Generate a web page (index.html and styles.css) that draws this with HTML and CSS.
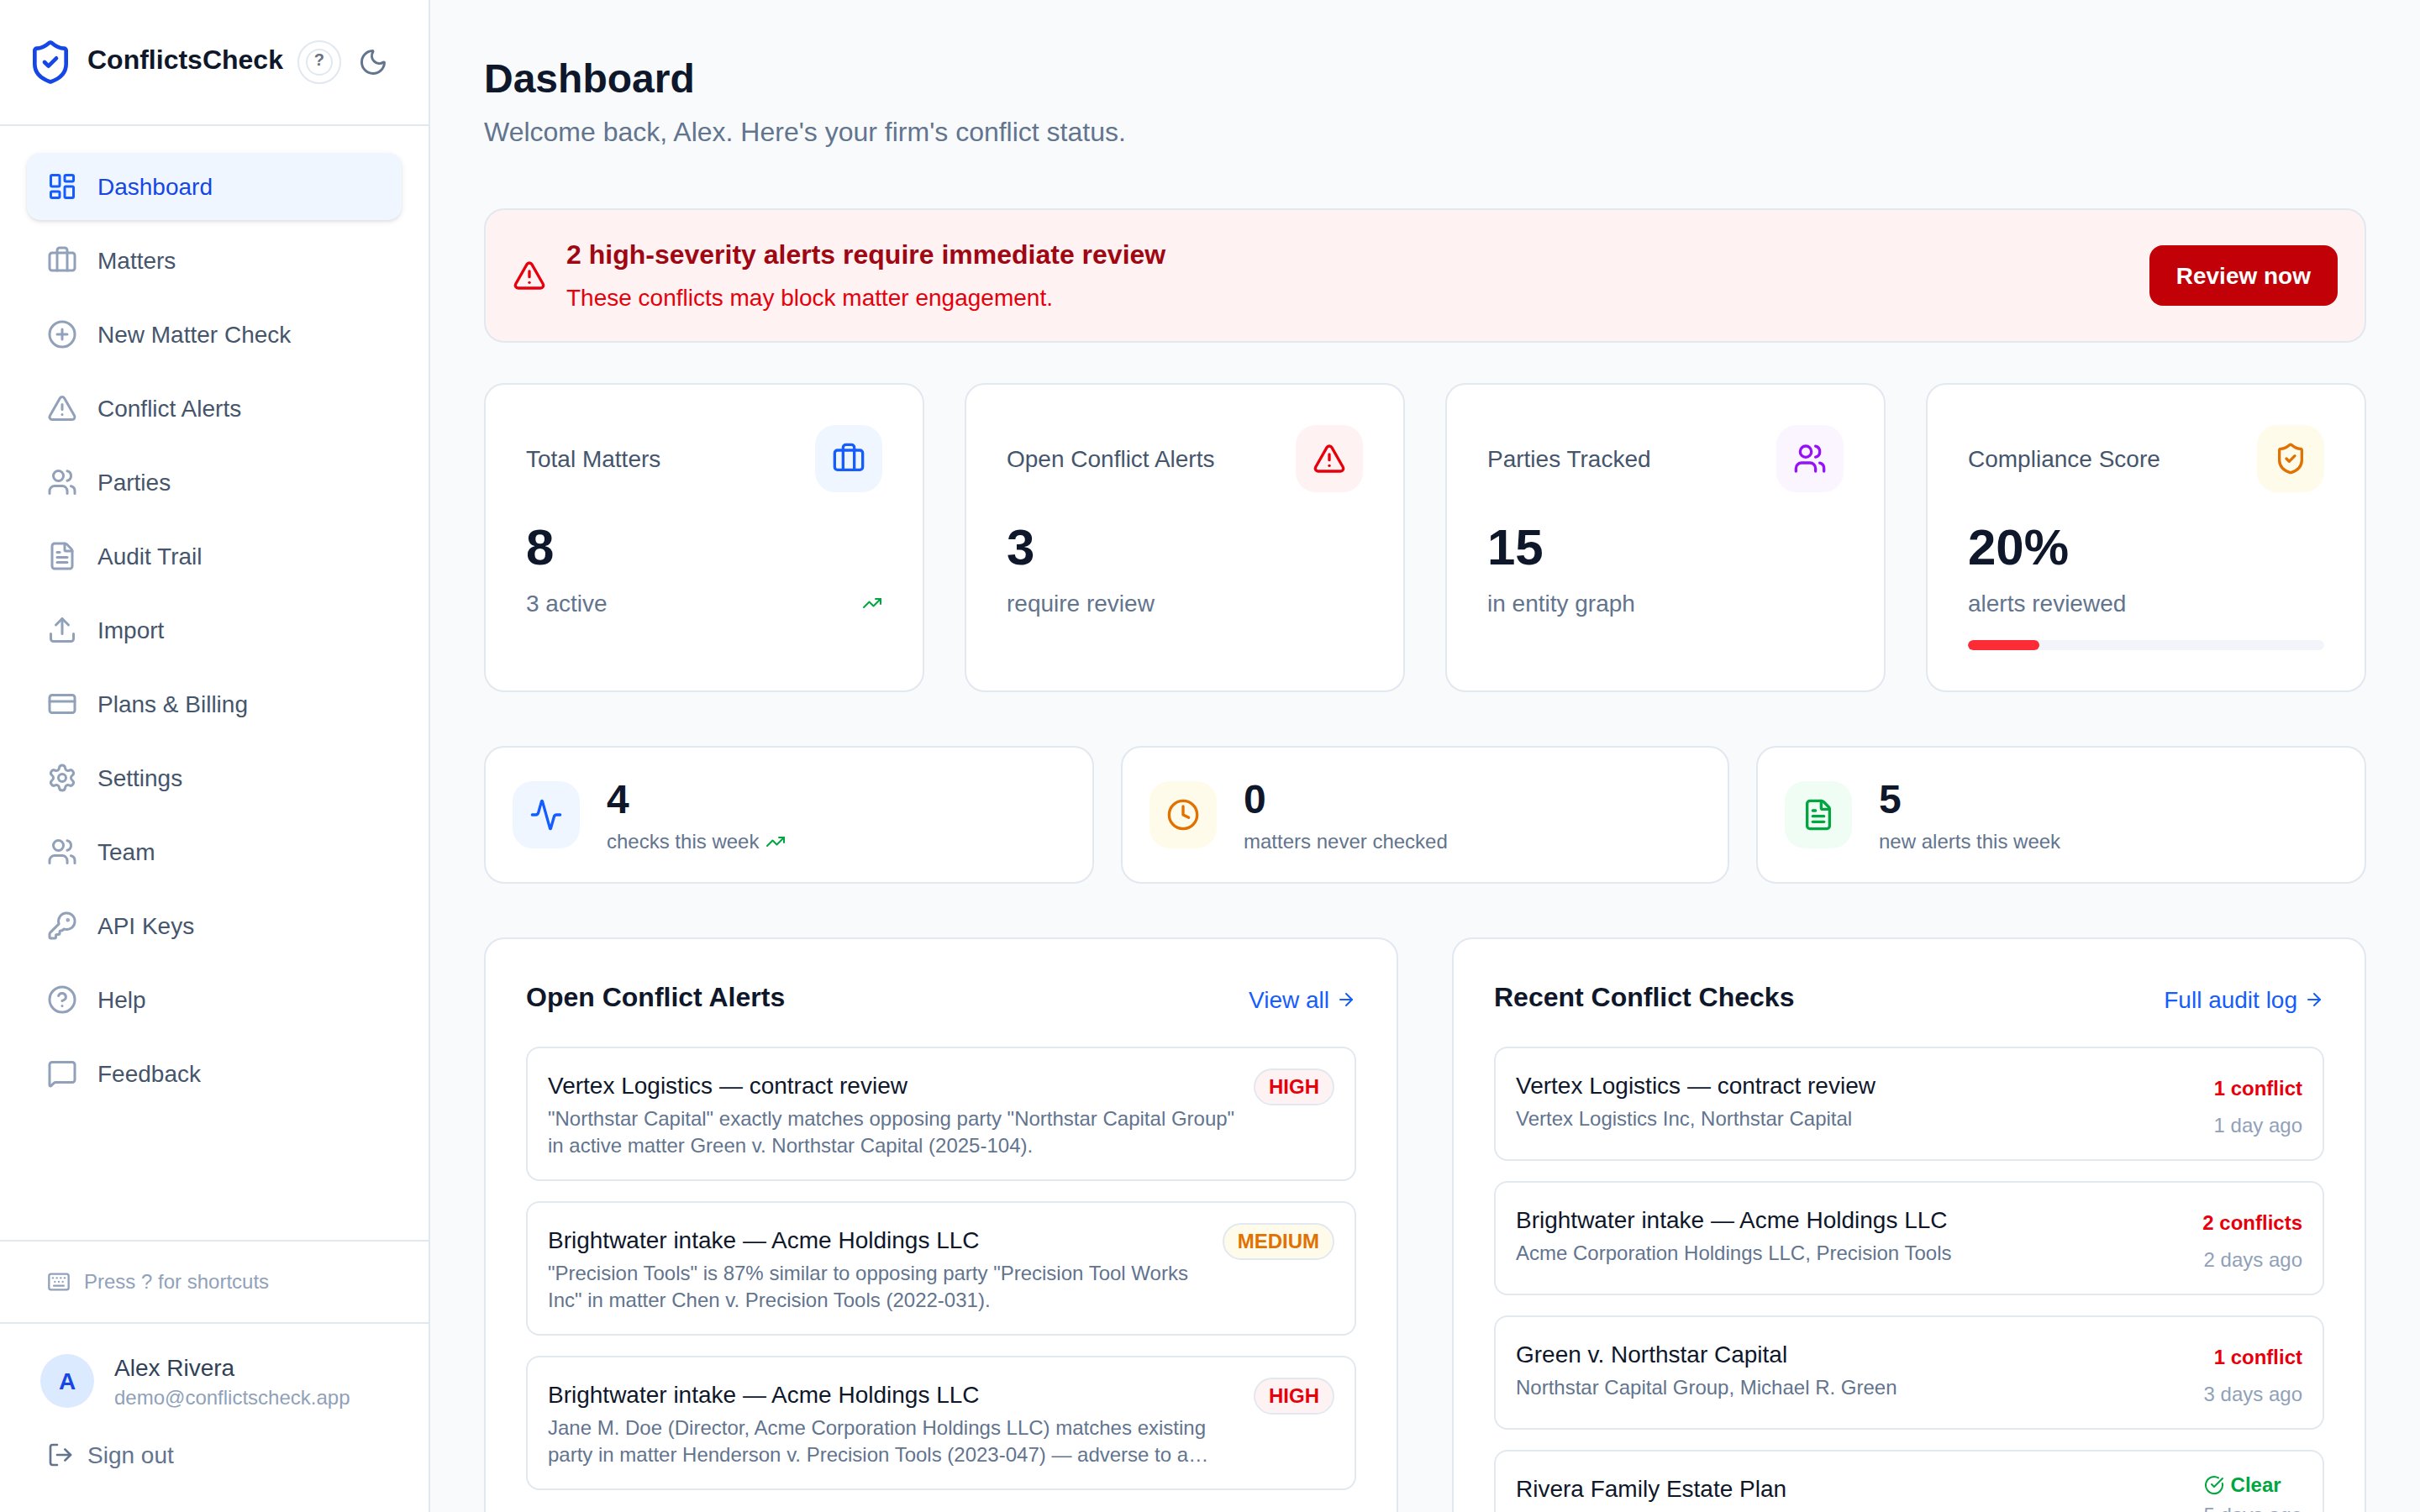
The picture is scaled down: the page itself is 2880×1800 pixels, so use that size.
FILE: index.html
```html
<!DOCTYPE html>
<html lang="en">
<head>
    <meta charset="UTF-8">
    <meta name="viewport" content="width=device-width, initial-scale=1.0">
    <title>ConflictsCheck</title>
    <link rel="stylesheet" href="styles.css">
</head>
<body>

<!-- icon set -->
<svg class="icon-defs" aria-hidden="true">
    <symbol id="i-shield" viewBox="0 0 24 24"><path d="M20 13c0 5-3.5 7.5-7.66 8.95a1 1 0 0 1-.67-.01C7.5 20.5 4 18 4 13V6a1 1 0 0 1 1-1c2 0 4.5-1.2 6.24-2.72a1.17 1.17 0 0 1 1.52 0C14.51 3.81 17 5 19 5a1 1 0 0 1 1 1z"/><path d="m9 12 2 2 4-4"/></symbol>
    <symbol id="i-moon" viewBox="0 0 24 24"><path d="M20.985 12.486a9 9 0 1 1-9.473-9.472c.405-.022.617.46.402.803a6 6 0 0 0 8.268 8.268c.344-.215.825-.004.803.401"/></symbol>
    <symbol id="i-dashboard" viewBox="0 0 24 24"><rect width="7" height="9" x="3" y="3" rx="1"/><rect width="7" height="5" x="14" y="3" rx="1"/><rect width="7" height="9" x="14" y="12" rx="1"/><rect width="7" height="5" x="3" y="16" rx="1"/></symbol>
    <symbol id="i-briefcase" viewBox="0 0 24 24"><path d="M16 20V4a2 2 0 0 0-2-2h-4a2 2 0 0 0-2 2v16"/><rect width="20" height="14" x="2" y="6" rx="2"/></symbol>
    <symbol id="i-plus" viewBox="0 0 24 24"><circle cx="12" cy="12" r="10"/><path d="M8 12h8"/><path d="M12 8v8"/></symbol>
    <symbol id="i-alert" viewBox="0 0 24 24"><path d="m21.73 18-8-14a2 2 0 0 0-3.48 0l-8 14A2 2 0 0 0 4 21h16a2 2 0 0 0 1.73-3"/><path d="M12 9v4"/><path d="M12 17h.01"/></symbol>
    <symbol id="i-users" viewBox="0 0 24 24"><path d="M16 21v-2a4 4 0 0 0-4-4H6a4 4 0 0 0-4 4v2"/><path d="M16 3.128a4 4 0 0 1 0 7.744"/><path d="M22 21v-2a4 4 0 0 0-3-3.87"/><circle cx="9" cy="7" r="4"/></symbol>
    <symbol id="i-file" viewBox="0 0 24 24"><path d="M6 22a2 2 0 0 1-2-2V4a2 2 0 0 1 2-2h8a2.4 2.4 0 0 1 1.704.706l3.588 3.588A2.4 2.4 0 0 1 20 8v12a2 2 0 0 1-2 2z"/><path d="M14 2v5a1 1 0 0 0 1 1h5"/><path d="M10 9H8"/><path d="M16 13H8"/><path d="M16 17H8"/></symbol>
    <symbol id="i-upload" viewBox="0 0 24 24"><path d="M12 3v12"/><path d="m17 8-5-5-5 5"/><path d="M21 15v4a2 2 0 0 1-2 2H5a2 2 0 0 1-2-2v-4"/></symbol>
    <symbol id="i-card" viewBox="0 0 24 24"><rect width="20" height="14" x="2" y="5" rx="2"/><path d="M2 10h20"/></symbol>
    <symbol id="i-settings" viewBox="0 0 24 24"><path d="M9.671 4.136a2.34 2.34 0 0 1 4.659 0 2.34 2.34 0 0 0 3.319 1.915 2.34 2.34 0 0 1 2.33 4.033 2.34 2.34 0 0 0 0 3.831 2.34 2.34 0 0 1-2.33 4.033 2.34 2.34 0 0 0-3.319 1.915 2.34 2.34 0 0 1-4.659 0 2.34 2.34 0 0 0-3.32-1.915 2.34 2.34 0 0 1-2.33-4.033 2.34 2.34 0 0 0 0-3.831A2.34 2.34 0 0 1 6.35 6.051a2.34 2.34 0 0 0 3.319-1.915"/><circle cx="12" cy="12" r="3"/></symbol>
    <symbol id="i-key" viewBox="0 0 24 24"><path d="M2.586 17.414A2 2 0 0 0 2 18.828V21a1 1 0 0 0 1 1h3a1 1 0 0 0 1-1v-1a1 1 0 0 1 1-1h1a1 1 0 0 0 1-1v-1a1 1 0 0 1 1-1h.172a2 2 0 0 0 1.414-.586l.814-.814a6.5 6.5 0 1 0-4-4z"/><circle cx="16.5" cy="7.5" r=".5" fill="currentColor"/></symbol>
    <symbol id="i-help" viewBox="0 0 24 24"><circle cx="12" cy="12" r="10"/><path d="M9.09 9a3 3 0 0 1 5.83 1c0 2-3 3-3 3"/><path d="M12 17h.01"/></symbol>
    <symbol id="i-message" viewBox="0 0 24 24"><path d="M22 17a2 2 0 0 1-2 2H6.828a2 2 0 0 0-1.414.586l-2.202 2.202A.71.71 0 0 1 2 21.286V5a2 2 0 0 1 2-2h16a2 2 0 0 1 2 2z"/></symbol>
    <symbol id="i-keyboard" viewBox="0 0 24 24"><path d="M10 8h.01"/><path d="M12 12h.01"/><path d="M14 8h.01"/><path d="M16 12h.01"/><path d="M18 8h.01"/><path d="M6 8h.01"/><path d="M7 16h10"/><path d="M8 12h.01"/><rect width="20" height="16" x="2" y="4" rx="2"/></symbol>
    <symbol id="i-logout" viewBox="0 0 24 24"><path d="m16 17 5-5-5-5"/><path d="M21 12H9"/><path d="M9 21H5a2 2 0 0 1-2-2V5a2 2 0 0 1 2-2h4"/></symbol>
    <symbol id="i-activity" viewBox="0 0 24 24"><path d="M22 12h-2.48a2 2 0 0 0-1.93 1.46l-2.35 8.36a.25.25 0 0 1-.48 0L9.24 2.18a.25.25 0 0 0-.48 0l-2.35 8.36A2 2 0 0 1 4.49 12H2"/></symbol>
    <symbol id="i-clock" viewBox="0 0 24 24"><circle cx="12" cy="12" r="10"/><path d="M12 6v6l4 2"/></symbol>
    <symbol id="i-trend" viewBox="0 0 24 24"><path d="M16 7h6v6"/><path d="m22 7-8.5 8.5-5-5L2 17"/></symbol>
    <symbol id="i-arrow" viewBox="0 0 24 24"><path d="M5 12h14"/><path d="m12 5 7 7-7 7"/></symbol>
    <symbol id="i-check" viewBox="0 0 24 24"><path d="M21.801 10A10 10 0 1 1 17 3.335"/><path d="m9 11 3 3L22 4"/></symbol>
</svg>

<div class="layout">
    <aside class="sidebar">
        <div class="sidebar-header">
            <svg class="icon brand-icon"><use href="#i-shield"/></svg>
            <span class="brand-name">ConflictsCheck</span>
            <button class="help-button"><span>?</span></button>
            <button class="theme-button"><svg class="icon"><use href="#i-moon"/></svg></button>
        </div>

        <nav class="nav">
            <a class="nav-item active"><svg class="icon"><use href="#i-dashboard"/></svg>Dashboard</a>
            <a class="nav-item"><svg class="icon"><use href="#i-briefcase"/></svg>Matters</a>
            <a class="nav-item"><svg class="icon"><use href="#i-plus"/></svg>New Matter Check</a>
            <a class="nav-item"><svg class="icon"><use href="#i-alert"/></svg>Conflict Alerts</a>
            <a class="nav-item"><svg class="icon"><use href="#i-users"/></svg>Parties</a>
            <a class="nav-item"><svg class="icon"><use href="#i-file"/></svg>Audit Trail</a>
            <a class="nav-item"><svg class="icon"><use href="#i-upload"/></svg>Import</a>
            <a class="nav-item"><svg class="icon"><use href="#i-card"/></svg>Plans &amp; Billing</a>
            <a class="nav-item"><svg class="icon"><use href="#i-settings"/></svg>Settings</a>
            <a class="nav-item"><svg class="icon"><use href="#i-users"/></svg>Team</a>
            <a class="nav-item"><svg class="icon"><use href="#i-key"/></svg>API Keys</a>
            <a class="nav-item"><svg class="icon"><use href="#i-help"/></svg>Help</a>
            <a class="nav-item"><svg class="icon"><use href="#i-message"/></svg>Feedback</a>
        </nav>

        <div class="shortcuts"><svg class="icon"><use href="#i-keyboard"/></svg>Press ? for shortcuts</div>

        <div class="account">
            <div class="user">
                <div class="avatar">A</div>
                <div>
                    <p class="user-name">Alex Rivera</p>
                    <p class="user-email">demo@conflictscheck.app</p>
                </div>
            </div>
            <a class="sign-out"><svg class="icon"><use href="#i-logout"/></svg>Sign out</a>
        </div>
    </aside>

    <main class="main">
        <header class="page-header">
            <h1>Dashboard</h1>
            <p>Welcome back, Alex. Here's your firm's conflict status.</p>
        </header>

        <section class="banner">
            <svg class="icon"><use href="#i-alert"/></svg>
            <div class="banner-text">
                <h2>2 high-severity alerts require immediate review</h2>
                <p>These conflicts may block matter engagement.</p>
            </div>
            <a class="review-button">Review now</a>
        </section>

        <section class="stats">
            <div class="card stat">
                <div class="stat-top">
                    <span>Total Matters</span>
                    <div class="tile blue"><svg class="icon"><use href="#i-briefcase"/></svg></div>
                </div>
                <p class="stat-value">8</p>
                <div class="stat-note">3 active <svg class="icon trend"><use href="#i-trend"/></svg></div>
            </div>
            <div class="card stat">
                <div class="stat-top">
                    <span>Open Conflict Alerts</span>
                    <div class="tile red"><svg class="icon"><use href="#i-alert"/></svg></div>
                </div>
                <p class="stat-value">3</p>
                <div class="stat-note">require review</div>
            </div>
            <div class="card stat">
                <div class="stat-top">
                    <span>Parties Tracked</span>
                    <div class="tile purple"><svg class="icon"><use href="#i-users"/></svg></div>
                </div>
                <p class="stat-value">15</p>
                <div class="stat-note">in entity graph</div>
            </div>
            <div class="card stat">
                <div class="stat-top">
                    <span>Compliance Score</span>
                    <div class="tile amber"><svg class="icon"><use href="#i-shield"/></svg></div>
                </div>
                <p class="stat-value">20%</p>
                <div class="stat-note">alerts reviewed</div>
                <div class="progress"><div class="progress-fill" style="width: 20%"></div></div>
            </div>
        </section>

        <section class="activity">
            <div class="card mini">
                <div class="tile blue"><svg class="icon"><use href="#i-activity"/></svg></div>
                <div>
                    <p class="mini-value">4</p>
                    <p class="mini-note">checks this week <svg class="icon trend"><use href="#i-trend"/></svg></p>
                </div>
            </div>
            <div class="card mini">
                <div class="tile amber"><svg class="icon"><use href="#i-clock"/></svg></div>
                <div>
                    <p class="mini-value">0</p>
                    <p class="mini-note">matters never checked</p>
                </div>
            </div>
            <div class="card mini">
                <div class="tile green"><svg class="icon"><use href="#i-file"/></svg></div>
                <div>
                    <p class="mini-value">5</p>
                    <p class="mini-note">new alerts this week</p>
                </div>
            </div>
        </section>

        <section class="panels">
            <div class="card panel">
                <div class="panel-header">
                    <h2>Open Conflict Alerts</h2>
                    <a class="panel-link">View all <svg class="icon"><use href="#i-arrow"/></svg></a>
                </div>
                <div class="list">
                    <div class="item">
                        <div class="item-body">
                            <p class="item-title">Vertex Logistics — contract review</p>
                            <p class="item-text">"Northstar Capital" exactly matches opposing party "Northstar Capital Group" in active matter Green v. Northstar Capital (2025-104).</p>
                        </div>
                        <span class="badge high">HIGH</span>
                    </div>
                    <div class="item">
                        <div class="item-body">
                            <p class="item-title">Brightwater intake — Acme Holdings LLC</p>
                            <p class="item-text">"Precision Tools" is 87% similar to opposing party "Precision Tool Works Inc" in matter Chen v. Precision Tools (2022-031).</p>
                        </div>
                        <span class="badge medium">MEDIUM</span>
                    </div>
                    <div class="item">
                        <div class="item-body">
                            <p class="item-title">Brightwater intake — Acme Holdings LLC</p>
                            <p class="item-text">Jane M. Doe (Director, Acme Corporation Holdings LLC) matches existing party in matter Henderson v. Precision Tools (2023-047) — adverse to a…</p>
                        </div>
                        <span class="badge high">HIGH</span>
                    </div>
                </div>
            </div>

            <div class="card panel">
                <div class="panel-header">
                    <h2>Recent Conflict Checks</h2>
                    <a class="panel-link">Full audit log <svg class="icon"><use href="#i-arrow"/></svg></a>
                </div>
                <div class="list">
                    <div class="item">
                        <div class="item-body">
                            <p class="item-title">Vertex Logistics — contract review</p>
                            <p class="item-text">Vertex Logistics Inc, Northstar Capital</p>
                        </div>
                        <div class="result">
                            <p class="conflicts">1 conflict</p>
                            <p class="date">1 day ago</p>
                        </div>
                    </div>
                    <div class="item">
                        <div class="item-body">
                            <p class="item-title">Brightwater intake — Acme Holdings LLC</p>
                            <p class="item-text">Acme Corporation Holdings LLC, Precision Tools</p>
                        </div>
                        <div class="result">
                            <p class="conflicts">2 conflicts</p>
                            <p class="date">2 days ago</p>
                        </div>
                    </div>
                    <div class="item">
                        <div class="item-body">
                            <p class="item-title">Green v. Northstar Capital</p>
                            <p class="item-text">Northstar Capital Group, Michael R. Green</p>
                        </div>
                        <div class="result">
                            <p class="conflicts">1 conflict</p>
                            <p class="date">3 days ago</p>
                        </div>
                    </div>
                    <div class="item">
                        <div class="item-body">
                            <p class="item-title">Rivera Family Estate Plan</p>
                        </div>
                        <div class="result">
                            <p class="clear"><svg class="icon"><use href="#i-check"/></svg>Clear</p>
                            <p class="date">5 days ago</p>
                        </div>
                    </div>
                </div>
            </div>
        </section>
    </main>
</div>

</body>
</html>
```
FILE: styles.css
```css
* {
    margin: 0;
    padding: 0;
    box-sizing: border-box;
}

body {
    font-family: "Liberation Sans", Arial, sans-serif;
    font-size: 28px;
    line-height: 41px;
    background-color: #f8fafc;
    color: #0f172b;
    overflow: hidden;
}

.icon-defs {
    display: none;
}

.icon {
    flex-shrink: 0;
    width: 40px;
    height: 40px;
    fill: none;
    stroke: currentColor;
    stroke-width: 2;
    stroke-linecap: round;
    stroke-linejoin: round;
}

.layout {
    display: flex;
    height: 1800px;
    overflow: hidden;
}

/* Sidebar */
.sidebar {
    display: flex;
    flex-direction: column;
    flex-shrink: 0;
    width: 512px;
    background-color: #fff;
    border-right: 2px solid #e2e8f0;
}

.sidebar-header {
    display: flex;
    align-items: center;
    height: 150px;
    padding: 0 32px;
    border-bottom: 2px solid #e2e8f0;
}

.brand-icon {
    width: 56px;
    height: 56px;
    color: #1447e6;
}

.brand-name {
    margin-left: 16px;
    padding-bottom: 6px;
    font-size: 32px;
    line-height: 40px;
    font-weight: bold;
}

.help-button,
.theme-button {
    display: flex;
    align-items: center;
    justify-content: center;
    flex-shrink: 0;
    width: 52px;
    height: 52px;
    background: none;
    border: none;
    border-radius: 50%;
    color: #62748e;
}

.help-button {
    margin-left: 17px;
    margin-right: 12px;
    border: 2px solid #e2e8f0;
}

.help-button span {
    width: 32px;
    height: 32px;
    border: 2px solid #e2e8f0;
    border-radius: 50%;
    font-size: 20px;
    font-weight: bold;
    line-height: 22px;
    font-family: "Liberation Sans", Arial, sans-serif;
    color: #6a7282;
}

.theme-button .icon {
    width: 36px;
    height: 36px;
}

.nav {
    display: flex;
    flex-direction: column;
    flex: 1;
    gap: 8px;
    padding: 32px;
}

.nav-item {
    display: flex;
    align-items: center;
    gap: 24px;
    height: 80px;
    padding: 0 24px;
    border-radius: 16px;
    color: #45556c;
}

.nav-item .icon {
    width: 36px;
    height: 36px;
    color: #90a1b9;
}

.nav-item.active {
    background-color: #eff6ff;
    color: #1447e6;
    box-shadow: 0 2px 6px rgba(0, 0, 0, 0.1), 0 2px 4px -2px rgba(0, 0, 0, 0.1);
}

.nav-item.active .icon {
    color: #155dfc;
}

.shortcuts {
    display: flex;
    align-items: center;
    gap: 16px;
    height: 98px;
    padding: 0 56px;
    border-top: 2px solid #e2e8f0;
    font-size: 24px;
    line-height: 32px;
    color: #90a1b9;
}

.shortcuts .icon {
    width: 28px;
    height: 28px;
}

.account {
    padding: 32px;
    border-top: 2px solid #e2e8f0;
}

.user {
    display: flex;
    align-items: center;
    gap: 24px;
    padding: 0 16px;
    margin-bottom: 16px;
}

.avatar {
    display: flex;
    align-items: center;
    justify-content: center;
    width: 64px;
    height: 64px;
    border-radius: 50%;
    background-color: #dbeafe;
    color: #1447e6;
    font-weight: bold;
}

.user-name {
    margin-bottom: -1px;
    color: #314158;
}

.user-email {
    font-size: 24px;
    line-height: 32px;
    color: #90a1b9;
}

.sign-out {
    display: flex;
    align-items: center;
    gap: 16px;
    height: 72px;
    padding: 0 24px;
    color: #62748e;
}

.sign-out .icon {
    width: 32px;
    height: 32px;
}

/* Main column */
.main {
    flex: 1;
    padding: 64px;
}

.page-header {
    height: 184px;
}

.page-header h1 {
    font-size: 48px;
    line-height: 60px;
}

.page-header p {
    margin-top: 7px;
    font-size: 32px;
    line-height: 52px;
    color: #62748e;
}

.banner {
    display: flex;
    align-items: center;
    gap: 24px;
    height: 160px;
    padding: 0 32px;
    margin-bottom: 48px;
    background-color: #fef2f2;
    border: 2px solid #e2e8f0;
    border-radius: 24px;
    color: #e7000b;
}

.banner-text {
    flex: 1;
}

.banner h2 {
    margin-bottom: 10px;
    font-size: 32px;
    line-height: 42px;
    color: #9f0712;
}

.banner p {
    margin-bottom: -1px;
}

.review-button {
    padding: 16px 32px 15px;
    border-radius: 16px;
    background-color: #c10007;
    color: #fff;
    font-weight: bold;
}

.card {
    background-color: #fff;
    border: 2px solid #e2e8f0;
    border-radius: 24px;
}

.tile {
    display: flex;
    align-items: center;
    justify-content: center;
    flex-shrink: 0;
    width: 80px;
    height: 80px;
    border-radius: 24px;
}

.blue {
    background-color: #eff6ff;
    color: #155dfc;
}

.red {
    background-color: #fef2f2;
    color: #e7000b;
}

.purple {
    background-color: #faf5ff;
    color: #9810fa;
}

.amber {
    background-color: #fffbeb;
    color: #e17100;
}

.green {
    background-color: #f0fdf4;
    color: #00a63e;
}

.trend {
    width: 24px;
    height: 24px;
    color: #00a63e;
}

/* Stat cards */
.stats {
    display: grid;
    grid-template-columns: repeat(4, 1fr);
    gap: 48px;
    margin-bottom: 64px;
}

.stat {
    padding: 48px;
}

.stat-top {
    display: flex;
    align-items: center;
    justify-content: space-between;
    color: #45556c;
}

.stat-value {
    margin: 32px 0 12px;
    font-size: 60px;
    line-height: 68px;
    font-weight: bold;
}

.stat-note {
    display: flex;
    align-items: center;
    justify-content: space-between;
    height: 40px;
    color: #62748e;
}

.progress {
    height: 12px;
    margin-top: 24px;
    border-radius: 6px;
    background-color: #f1f5f9;
    overflow: hidden;
}

.progress-fill {
    height: 100%;
    border-radius: 6px;
    background-color: #fb2c36;
}

.activity {
    display: grid;
    grid-template-columns: 726fr 724fr 726fr;
    gap: 32px;
    margin-bottom: 64px;
}

.mini {
    display: flex;
    align-items: center;
    gap: 32px;
    padding: 32px;
}

.mini-value {
    margin-bottom: 4px;
    font-size: 48px;
    line-height: 60px;
    font-weight: bold;
}

.mini-note {
    display: flex;
    align-items: center;
    gap: 8px;
    font-size: 24px;
    line-height: 32px;
    color: #62748e;
}

/* Panels */
.panels {
    display: grid;
    grid-template-columns: 1fr 1fr;
    gap: 64px;
}

.panel {
    height: 900px;
    padding: 48px;
}

.panel-header {
    display: flex;
    justify-content: space-between;
    height: 48px;
    margin-bottom: 32px;
}

.panel-header h2 {
    font-size: 32px;
    line-height: 42px;
}

.panel-link {
    display: flex;
    align-items: center;
    gap: 8px;
    color: #155dfc;
}

.panel-link .icon {
    width: 24px;
    height: 24px;
}

.list {
    display: flex;
    flex-direction: column;
    gap: 24px;
}

.item {
    display: flex;
    align-items: flex-start;
    justify-content: space-between;
    gap: 20px;
    padding: 24px;
    border: 2px solid #e2e8f0;
    border-radius: 16px;
}

.item-body {
    flex: 1;
}

.item-text {
    margin-top: 3px;
    font-size: 24px;
    line-height: 32px;
    color: #62748e;
}

.badge {
    padding: 4px 16px;
    border: 2px solid #e2e8f0;
    border-radius: 22px;
    font-size: 24px;
    line-height: 32px;
    font-weight: bold;
}

.high {
    background-color: #fef2f2;
    color: #e7000b;
}

.medium {
    background-color: #fffbeb;
    color: #e17100;
}

.result {
    font-size: 24px;
    line-height: 32px;
    text-align: right;
}

.conflicts {
    padding: 8px 0;
    font-weight: bold;
    color: #e7000b;
}

.clear {
    display: flex;
    align-items: center;
    gap: 8px;
    font-weight: bold;
    color: #00a63e;
}

.clear .icon {
    width: 24px;
    height: 24px;
}

.date {
    margin-top: 4px;
    color: #90a1b9;
}
```
